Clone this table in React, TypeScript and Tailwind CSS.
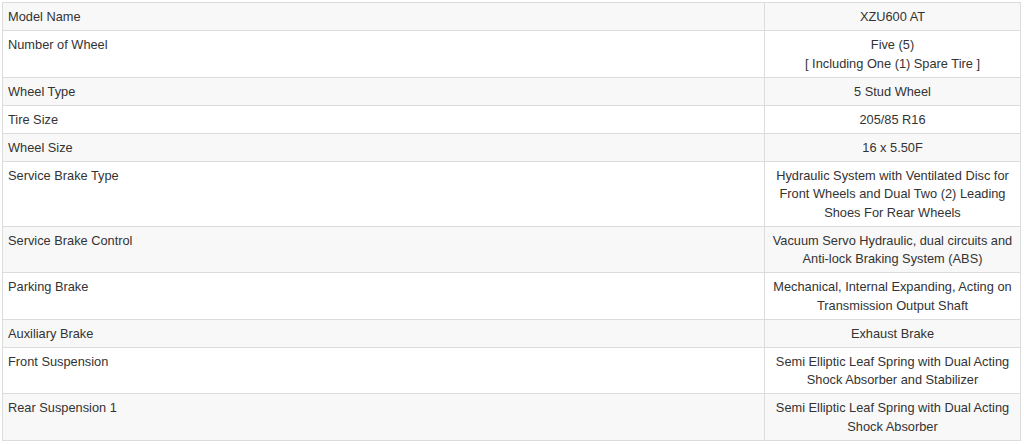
import React from "react";

const rows: [string, string[]][] = [
  ["Model Name", ["XZU600 AT"]],
  ["Number of Wheel", ["Five (5)", "[ Including One (1) Spare Tire ]"]],
  ["Wheel Type", ["5 Stud Wheel"]],
  ["Tire Size", ["205/85 R16"]],
  ["Wheel Size", ["16 x 5.50F"]],
  [
    "Service Brake Type",
    [
      "Hydraulic System with Ventilated Disc for",
      "Front Wheels and Dual Two (2) Leading",
      "Shoes For Rear Wheels",
    ],
  ],
  [
    "Service Brake Control",
    ["Vacuum Servo Hydraulic, dual circuits and", "Anti-lock Braking System (ABS)"],
  ],
  [
    "Parking Brake",
    ["Mechanical, Internal Expanding, Acting on", "Transmission Output Shaft"],
  ],
  ["Auxiliary Brake", ["Exhaust Brake"]],
  [
    "Front Suspension",
    ["Semi Elliptic Leaf Spring with Dual Acting", "Shock Absorber and Stabilizer"],
  ],
  [
    "Rear Suspension 1",
    ["Semi Elliptic Leaf Spring with Dual Acting", "Shock Absorber"],
  ],
];

export default function App() {
  return (
    <div className="bg-white w-[1024px] h-[444px] pt-[2px] pl-[2px] font-['Liberation_Sans',Arial,sans-serif] text-[12.8px] leading-[18.5px] text-[#333]">
      <table className="w-[1019px] border-collapse border border-[#dcdcdc] border-t-[#a8a8a8]">
        <colgroup>
          <col className="w-[763px]" />
          <col className="w-[256px]" />
        </colgroup>
        <tbody>
          {rows.map(([label, value], i) => (
            <tr key={label} className={i % 2 === 0 ? "bg-[#f8f8f8]" : "bg-white"}>
              <td className="border border-[#dcdcdc] align-top pl-[5px] pr-[5px] pt-[5px] pb-[3.5px]">
                {label}
              </td>
              <td className="border border-[#dcdcdc] align-top text-center px-[5px] pt-[5px] pb-[3.5px]">
                {value.map((v, j) => (
                  <div key={j} className="whitespace-nowrap">
                    {v}
                  </div>
                ))}
              </td>
            </tr>
          ))}
        </tbody>
      </table>
    </div>
  );
}
